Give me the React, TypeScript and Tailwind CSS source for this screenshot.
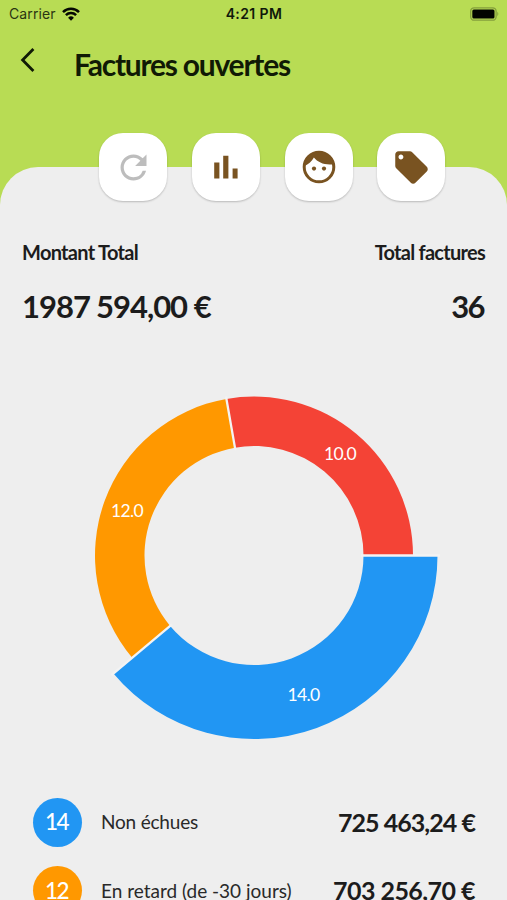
import { MdRefresh, MdLocalOffer } from 'react-icons/md';
import type { ReactNode } from 'react';

function IconButton({ children, muted }: { children: ReactNode; muted?: boolean }) {
  return (
    <button
      className={`flex h-[68px] w-[68px] items-center justify-center rounded-[24px] bg-white shadow-[0_1px_2px_rgba(0,0,0,0.22)] ${muted ? 'text-[#bdbdbd]' : 'text-[#795321]'}`}
    >
      {children}
    </button>
  );
}

function BarsIcon() {
  return (
    <svg width="40" height="40" viewBox="0 0 40 40" fill="currentColor">
      <path d="M8.2 15.5h5.2v16H8.2zM17.2 8.7h5.2v22.8h-5.2zM26.6 21.5h5v10h-5z" />
    </svg>
  );
}

function FaceIcon() {
  return (
    <svg width="40" height="40" viewBox="0 0 40 40" fill="currentColor">
      <circle cx="20" cy="20" r="14.8" fill="none" stroke="currentColor" strokeWidth="3" />
      <path d="M4.5 19.2C9.4 17.8 12.8 14.5 14.9 10.6C19.2 15.8 26 18.6 35.4 17.2A15.7 15.7 0 0 0 4.5 19.2z" />
      <circle cx="15" cy="21.6" r="2.1" />
      <circle cx="25" cy="21.6" r="2.1" />
    </svg>
  );
}

function StatusBar() {
  return (
    <div className="grid h-[27px] grid-cols-3 items-center pl-[9px] pr-[8px] font-['Inter',sans-serif] text-[14px] text-[#10180a]">
      <div className="flex items-center gap-[6px]">
        <span className="tracking-[0.1px] text-[#2a3512]">Carrier</span>
        <svg width="18" height="14" viewBox="0 0 18 14" fill="none" stroke="#050802" strokeWidth="2.5">
          <path d="M1 5.1a11.3 11.3 0 0 1 16 0" />
          <path d="M3.9 8.2a7.2 7.2 0 0 1 10.2 0" />
          <path d="M9 13.7 6.1 10.8a4.1 4.1 0 0 1 5.8 0z" fill="#050802" stroke="none" />
        </svg>
      </div>
      <span className="text-center font-semibold tracking-[0.4px]">4:21 PM</span>
      <svg className="justify-self-end" width="29" height="14" viewBox="0 0 29 14">
        <rect x="0.7" y="0.8" width="25.4" height="12.4" rx="3.5" fill="none" stroke="#849e3c" strokeWidth="1.3" />
        <rect x="2.3" y="2.5" width="22.2" height="9" rx="1.5" fill="#020400" />
        <path d="M27.3 4.8q2 2.2 0 4.4z" fill="#849e3c" />
      </svg>
    </div>
  );
}

function Donut() {
  return (
    <svg
      className="block"
      width="507"
      height="380"
      viewBox="0 375 507 380"
      fontFamily="Lato, sans-serif"
      fontSize="17.5"
      letterSpacing="-0.7"
      fill="white"
      textAnchor="middle"
    >
      <g transform="translate(254 555.5)">
        <path d="M183.5 0A183.5 183.5 0 0 1 -140.57 117.95L-83.88 70.39A109.5 109.5 0 0 0 109.5 0z" fill="#2196f3" />
        <path d="M-121.8 102.2A159 159 0 0 1 -27.61 -156.58L-19.01 -107.84A109.5 109.5 0 0 0 -83.88 70.39z" fill="#ff9800" />
        <path d="M-27.61 -156.58A159 159 0 0 1 159 0L109.5 0A109.5 109.5 0 0 0 -19.01 -107.84z" fill="#f44336" />
        <path d="M107 0H186M-82 68.8L-142.5 119.6M-18.6 -105.4L-28 -159" stroke="#f3f3f3" strokeWidth="2.3" />
      </g>
      <text x="340" y="460">10.0</text>
      <text x="127" y="517">12.0</text>
      <text x="303.5" y="700.5">14.0</text>
    </svg>
  );
}

type RowProps = {
  count: string;
  label: string;
  amount: string;
  color: string;
  labelTracking: string;
  amountTracking: string;
};

function InvoiceRow({ count, label, amount, color, labelTracking, amountTracking }: RowProps) {
  return (
    <div className="flex h-[68.5px] shrink-0 items-center pl-[33px] pr-[32px]">
      <span
        className={`flex h-[49px] w-[49px] shrink-0 items-center justify-center rounded-full pr-[2px] text-[22.5px] font-medium tracking-[-1.5px] text-white ${color}`}
      >
        {count}
      </span>
      <span className={`ml-[19px] flex-1 whitespace-nowrap text-[19px] text-[#292929] ${labelTracking}`}>{label}</span>
      <span className={`whitespace-nowrap text-[25px] font-bold ${amountTracking}`}>{amount}</span>
    </div>
  );
}

export default function App() {
  return (
    <main className="flex h-[900px] w-[507px] flex-col overflow-hidden bg-[#b8dc54] font-['Lato',sans-serif] text-[#1c1c1c]">
      <StatusBar />
      <header className="flex h-[140px] shrink-0 items-start pl-[19px] text-[#101a05]">
        <svg className="mt-[20px]" width="16" height="26" viewBox="0 0 16 26" fill="none" stroke="currentColor" strokeWidth="2.8">
          <path d="M14.4 2 3.6 13l10.8 11" />
        </svg>
        <h1 className="ml-[39px] mt-[18px] whitespace-nowrap text-[30px] font-bold leading-[38px] tracking-[-1.24px]">
          Factures ouvertes
        </h1>
      </header>
      <section className="flex flex-1 flex-col rounded-t-[38px] bg-[#eeeeee]">
        <div className="-mt-[34px] ml-[99px] flex gap-[24.8px]">
          <IconButton muted>
            <MdRefresh size={39} />
          </IconButton>
          <IconButton>
            <BarsIcon />
          </IconButton>
          <IconButton>
            <FaceIcon />
          </IconButton>
          <IconButton>
            <MdLocalOffer size={39} />
          </IconButton>
        </div>
        <div className="mt-[36px] flex h-[138px] justify-between pl-[22px] pr-[22px]">
          <div>
            <h2 className="text-[20px] font-bold leading-[30px] tracking-[-0.7px]">Montant Total</h2>
            <p className="mt-[18px] whitespace-nowrap text-[31px] font-bold leading-[42px] tracking-[-1px]">
              1<span className="inline-block w-0"> </span>987<span className="inline-block w-[6px]"> </span>594,00 €
            </p>
          </div>
          <div className="text-right">
            <h2 className="text-[20px] font-bold leading-[30px] tracking-[-0.73px]">Total factures</h2>
            <p className="mt-[18px] pr-px text-[31px] font-bold leading-[42px] tracking-[-1.6px]">36</p>
          </div>
        </div>
        <Donut />
        <div className="mt-[33px] flex h-[112px] flex-col overflow-hidden">
          <InvoiceRow
            count="14"
            label="Non échues"
            amount="725 463,24 €"
            color="bg-[#2196f3]"
            labelTracking="tracking-[-0.2px]"
            amountTracking="tracking-[-0.95px]"
          />
          <InvoiceRow
            count="12"
            label="En retard (de -30 jours)"
            amount="703 256,70 €"
            color="bg-[#ff9800]"
            labelTracking="tracking-normal"
            amountTracking="tracking-[-0.55px]"
          />
        </div>
      </section>
    </main>
  );
}
